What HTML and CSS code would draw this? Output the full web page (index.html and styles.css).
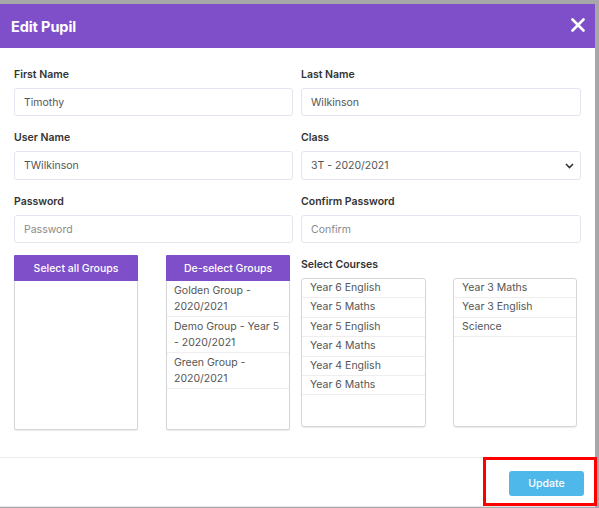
FILE: index.html
```html
<!DOCTYPE html>
<html>
<head>
<meta charset="utf-8">
<link rel="stylesheet" href="styles.css">
</head>
<body>
<div class="modal">
  <div class="modal-header">
    <h1 class="title">Edit Pupil</h1>
    <svg class="close" width="14" height="14" viewBox="0 0 14 14"><path d="M1.5 1.5 L12.5 12.5 M12.5 1.5 L1.5 12.5" stroke="#fff" stroke-width="2.6" stroke-linecap="round"/></svg>
  </div>
  <div class="modal-body">
    <div class="grid">
      <div class="field">
        <label class="label">First Name</label>
        <div class="input">Timothy</div>
      </div>
      <div class="field">
        <label class="label">Last Name</label>
        <div class="input">Wilkinson</div>
      </div>
      <div class="field">
        <label class="label">User Name</label>
        <div class="input tall">TWilkinson</div>
      </div>
      <div class="field">
        <label class="label">Class</label>
        <div class="input tall select"><span>3T - 2020/2021</span>
          <svg width="9" height="6" viewBox="0 0 9 6"><path d="M1 1 L4.5 4.5 L8 1" fill="none" stroke="#333" stroke-width="1.6"/></svg>
        </div>
      </div>
      <div class="field">
        <label class="label">Password</label>
        <div class="input placeholder">Password</div>
      </div>
      <div class="field">
        <label class="label">Confirm Password</label>
        <div class="input placeholder">Confirm</div>
      </div>
    </div>
    <div class="lists">
      <div class="groups">
        <div class="group-col">
          <div class="btn-purple">Select all Groups</div>
          <div class="listbox gbox"></div>
        </div>
        <div class="group-col">
          <div class="btn-purple">De-select Groups</div>
          <div class="listbox gbox">
            <div class="gitem">Golden Group -<br>2020/2021</div>
            <div class="gitem">Demo Group - Year 5<br>- 2020/2021</div>
            <div class="gitem">Green Group -<br>2020/2021</div>
          </div>
        </div>
      </div>
      <div class="courses">
        <label class="label courses-label">Select Courses</label>
        <div class="course-boxes">
          <div class="listbox cbox">
            <div class="citem">Year 6 English</div>
            <div class="citem">Year 5 Maths</div>
            <div class="citem">Year 5 English</div>
            <div class="citem">Year 4 Maths</div>
            <div class="citem">Year 4 English</div>
            <div class="citem">Year 6 Maths</div>
          </div>
          <div class="listbox cbox">
            <div class="citem">Year 3 Maths</div>
            <div class="citem">Year 3 English</div>
            <div class="citem">Science</div>
          </div>
        </div>
      </div>
    </div>
  </div>
  <div class="modal-footer">
    <div class="btn-update">Update</div>
  </div>
  <div class="highlight"></div>
</div>
</body>
</html>
```

FILE: styles.css
```css
html, body {
  margin: 0;
  padding: 0;
}
body {
  background: #a7a7a9;
  font-family: Inter, "Noto Sans", "DejaVu Sans", sans-serif;
  height: 508px;
  overflow: hidden;
}
.modal {
  position: relative;
  margin-top: 4px;
  width: 595px;
  height: 503px;
  background: #fff;
  box-sizing: border-box;
  border-bottom: 1px solid #e6e6e6;
}
.modal-header {
  height: 44px;
  background: #7f4fc9;
  display: flex;
  align-items: center;
  justify-content: space-between;
  padding: 0 10px 0 11px;
}
.title {
  margin: 0;
  color: #fff;
  font-size: 14.5px;
  font-weight: 700;
  letter-spacing: -0.1px;
}
.close {
  margin-top: -2px;
}
.modal-body {
  padding: 20px 14px 0 14px;
  height: 410px;
  box-sizing: border-box;
  border-bottom: 1px solid #e9ecef;
}
.grid {
  display: grid;
  grid-template-columns: 279px 280px;
  column-gap: 8px;
  row-gap: 15px;
}
.field {
  display: flex;
  flex-direction: column;
}
.label {
  font-size: 10.5px;
  font-weight: 600;
  color: #333;
  line-height: 13px;
  margin-bottom: 7px;
}
.input {
  height: 28px;
  box-sizing: border-box;
  border: 1px solid #e1e6ee;
  border-radius: 3px;
  padding: 0 9px;
  display: flex;
  align-items: center;
  font-size: 10.5px;
  color: #555;
}
.input.tall {
  height: 29px;
}
.select {
  justify-content: space-between;
  padding-right: 6px;
}
.placeholder {
  color: #8a8a8a;
}
.lists {
  display: grid;
  grid-template-columns: 279px 280px;
  column-gap: 8px;
  margin-top: 12px;
}
.groups {
  display: flex;
  gap: 28px;
}
.group-col {
  width: 124px;
  display: flex;
  flex-direction: column;
}
.btn-purple {
  height: 26px;
  background: #7f4fc9;
  color: #fff;
  font-size: 10.5px;
  font-weight: 500;
  display: flex;
  align-items: center;
  justify-content: center;
  border-radius: 1px 1px 0 0;
}
.listbox {
  box-sizing: border-box;
  border: 1px solid #d6d6d6;
  border-radius: 2px;
  box-shadow: 0 1px 1px rgba(0,0,0,0.08);
  background: #fff;
  overflow: hidden;
}
.gbox {
  height: 149px;
  border-top: none;
}
.gitem {
  font-size: 10.5px;
  color: #555;
  line-height: 15.5px;
  padding: 2px 7px 2px 7px;
  border-bottom: 1px solid #eee;
}
.courses {
  display: flex;
  flex-direction: column;
  padding-top: 3px;
}
.courses-label {
  margin-bottom: 7px;
}
.course-boxes {
  display: flex;
  gap: 27px;
}
.cbox {
  width: 125px;
  height: 149px;
  border-radius: 3px;
}
.cbox + .cbox {
  width: 124px;
}
.citem {
  font-size: 10.5px;
  color: #555;
  line-height: 14.4px;
  padding: 2px 8px;
  border-bottom: 1px solid #eee;
}
.modal-footer {
  height: 48px;
  display: flex;
  align-items: center;
  justify-content: flex-end;
  padding-right: 11px;
}
.btn-update {
  width: 75px;
  height: 25px;
  margin-top: 3px;
  background: #4fb8ea;
  color: #fff;
  font-size: 10.5px;
  font-weight: 500;
  border-radius: 3px;
  display: flex;
  align-items: center;
  justify-content: center;
}
.highlight {
  position: absolute;
  left: 483px;
  top: 453px;
  width: 114px;
  height: 49px;
  box-sizing: border-box;
  border: 3px solid #f00;
}
```
